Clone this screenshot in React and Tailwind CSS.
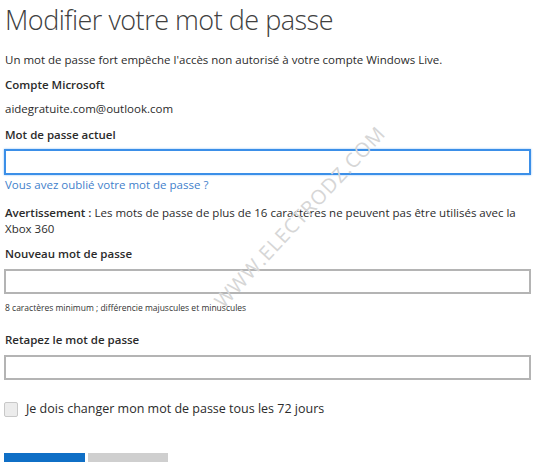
export default function App() {
  return (
    <div className="relative h-[462px] w-[534px] overflow-hidden bg-white font-['Open_Sans',sans-serif] text-[#2b2b2b]">
      <div className="flex flex-col px-[4px]">
        <h1 className="ml-[1px] mt-[0px] text-[27px] font-light leading-[40px] tracking-[-0.5px] text-[#404040]">
          Modifier votre mot de passe
        </h1>
        <p className="ml-[1px] mt-[12px] text-[11.5px] leading-[16px]">
          Un mot de passe fort empêche l'accès non autorisé à votre compte Windows Live.
        </p>
        <p className="ml-[1px] mt-[9px] text-[11.5px] font-semibold leading-[16px]">Compte Microsoft</p>
        <p className="ml-[1px] mt-[8px] text-[11.5px] leading-[16px]">aidegratuite.com@outlook.com</p>
        <label className="ml-[1px] mt-[10px] text-[11.5px] font-semibold leading-[16px]">Mot de passe actuel</label>
        <div className="mt-[6px] h-[26px] w-[527px] border-2 border-[#3b8fe8] shadow-[0_0_2px_#8fc0f5]" />
        <a className="ml-[1px] mt-[2px] text-[11.5px] leading-[16px] text-[#3f7fcb]">
          Vous avez oublié votre mot de passe ?
        </a>
        <p className="ml-[1px] mt-[12px] text-[11.5px] leading-[16px]">
          <span className="font-semibold">Avertissement :</span> Les mots de passe de plus de 16 caractères ne peuvent pas être utilisés avec la Xbox 360
        </p>
        <label className="ml-[1px] mt-[9px] text-[11.5px] font-semibold leading-[16px]">Nouveau mot de passe</label>
        <div className="mt-[7px] h-[25px] w-[527px] border-2 border-[#b4b4b4]" />
        <p className="ml-[1px] mt-[8px] text-[8.5px] leading-[12px] text-[#333]">
          8 caractères minimum ; différencie majuscules et minuscules
        </p>
        <label className="ml-[1px] mt-[18px] text-[11.5px] font-semibold leading-[16px]">Retapez le mot de passe</label>
        <div className="mt-[7px] h-[25px] w-[527px] border-2 border-[#b4b4b4]" />
        <div className="mt-[21px] flex items-center gap-[8px]">
          <div className="h-[15px] w-[14px] rounded-[2px] border border-[#c8c8c8] bg-[#ececec]" />
          <span className="text-[12.5px] leading-[16px]">
            Je dois changer mon mot de passe tous les 72 jours
          </span>
        </div>
        <div className="mt-[36px] flex gap-[3px]">
          <div className="h-[20px] w-[81px] bg-[#0f6fc6]" />
          <div className="h-[20px] w-[80px] bg-[#cfcfcf]" />
        </div>
      </div>
      <div className="pointer-events-none absolute left-[165px] top-[202px] w-[270px] -rotate-[47deg] text-center text-[20px] tracking-[1px] text-[#d6d6d6]">
        WWW.ELECTRODZ.COM
      </div>
    </div>
  );
}
